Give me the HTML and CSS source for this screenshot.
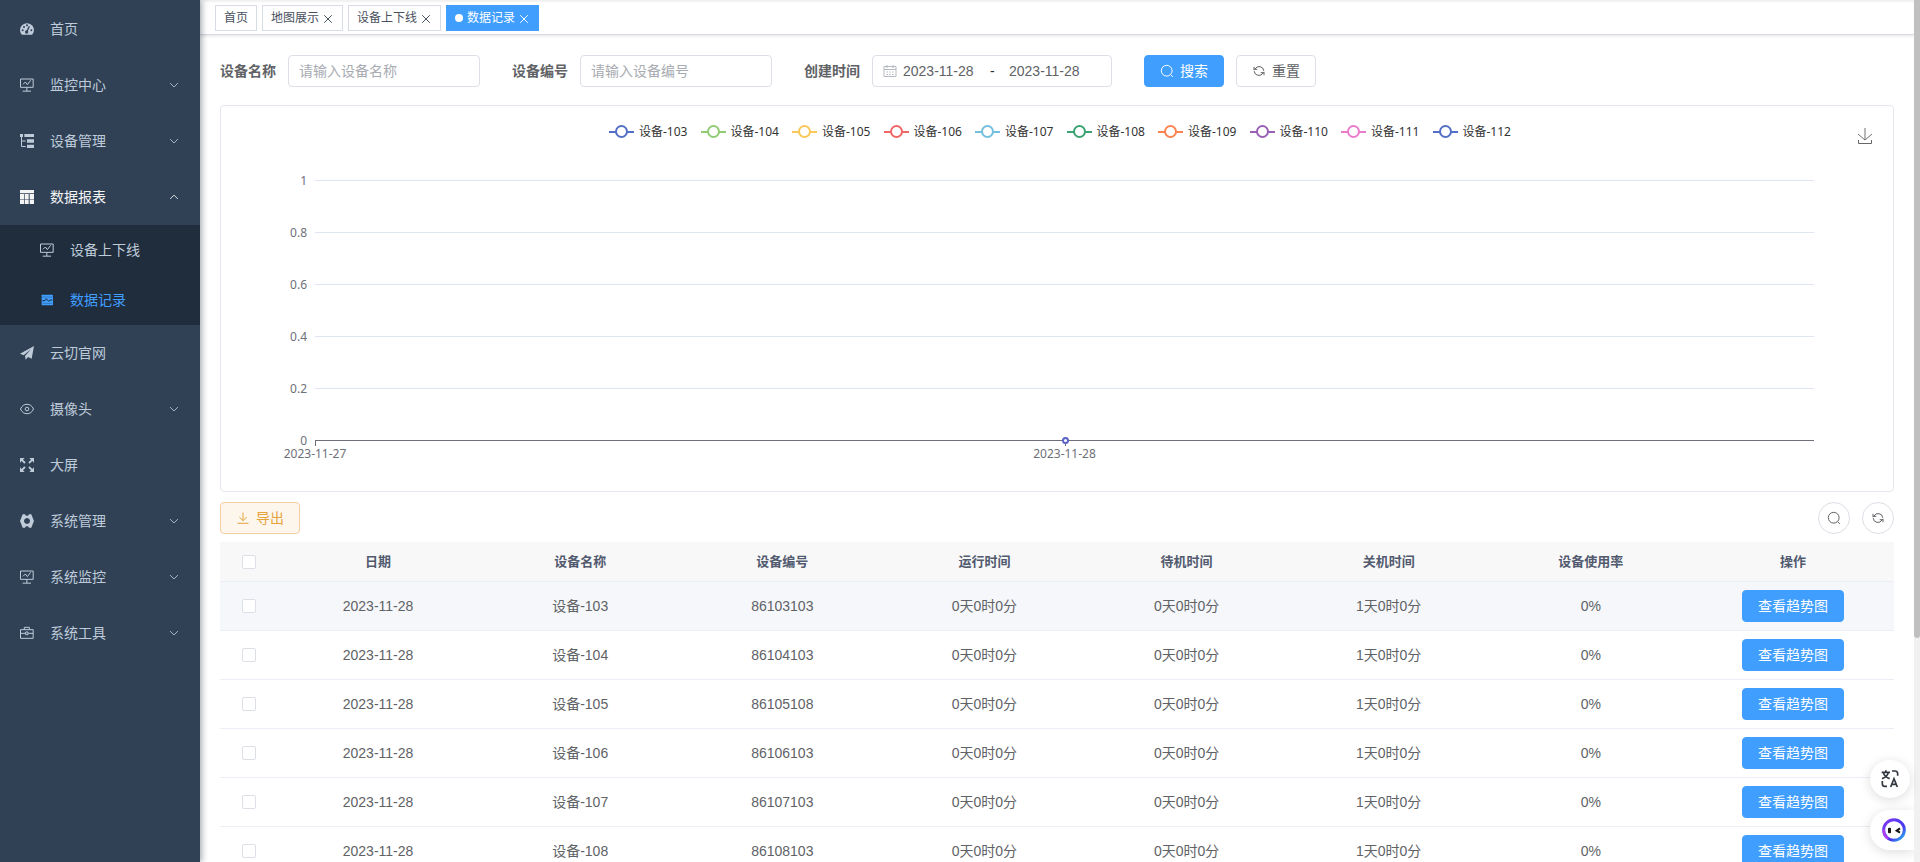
FILE: index.html
```html
<!DOCTYPE html>
<html lang="zh-CN">
<head>
<meta charset="utf-8">
<meta name="viewport" content="width=device-width, initial-scale=1">
<title>数据记录</title>
<link rel="stylesheet" href="styles.css">
</head>
<body>
<svg class="sprite" aria-hidden="true">
  <symbol id="i-monitor" viewBox="0 0 42 42"><path d="M1.500 3h38v25h-38zM20.500 28v11M8 39.500h25M9 19l7-7 6 8 10-13" fill="none" stroke="currentColor" stroke-width="3"/></symbol>
  <symbol id="i-down" viewBox="0 0 14 14"><path d="M2.500 4.800L7 9.300l4.500-4.500" fill="none" stroke="currentColor"/></symbol>
  <symbol id="i-up" viewBox="0 0 14 14"><path d="M2.500 9.300L7 4.800l4.500 4.500" fill="none" stroke="currentColor"/></symbol>
  <symbol id="i-close" viewBox="0 0 12 12"><path d="M2.200 2.200l7.600 7.600M9.800 2.200l-7.600 7.600" fill="none" stroke="currentColor"/></symbol>
  <symbol id="i-search" viewBox="0 0 14 14"><circle cx="6.700" cy="6.700" r="5.400" fill="none" stroke="currentColor"/><path d="M10.600 10.600l2.300 2.300" stroke="currentColor"/></symbol>
  <symbol id="i-refresh" viewBox="0 0 14 14"><path d="M2 6.200V2.800M2 5.300h3.300M3 5a4.700 4.700 0 0 1 8.800 1.800M12 7.800v3.400M12 8.700H8.700M11 9a4.700 4.700 0 0 1-8.800-1.800" fill="none" stroke="currentColor"/></symbol>
  <symbol id="i-download" viewBox="0 0 14 14"><path d="M7 1.500v8M3.300 6L7 9.700 10.700 6M1.500 12.300h11" fill="none" stroke="currentColor"/></symbol>
</svg>

<div class="app">
  <nav class="sidebar">
    <a class="item" href="#"><svg class="icon" viewBox="0 0 42 42"><path d="M6 38C-2 31-1 17 5 11 13 1 29 1 37 11c6 6 7 20-1 27z" fill="currentColor"/><g fill="#304156"><circle cx="8" cy="25" r="3"/><circle cx="12" cy="15" r="3"/><circle cx="21" cy="10" r="3"/><circle cx="34" cy="25" r="3"/><circle cx="20" cy="30" r="5"/></g><path d="M20 30l8-17" stroke="#304156" stroke-width="4"/></svg><span>首页</span></a>
    <a class="item" href="#"><svg class="icon"><use href="#i-monitor"/></svg><span>监控中心</span><svg class="arrow"><use href="#i-down"/></svg></a>
    <a class="item" href="#"><svg class="icon" viewBox="0 0 42 42"><path d="M0 0h9v9H0zM13 0h29v9H13zM21 16h21v10H21zM21 32h21v10H21z" fill="currentColor"/><path d="M4.500 9v28.500H17M4.500 21H17" fill="none" stroke="currentColor" stroke-width="3"/></svg><span>设备管理</span><svg class="arrow"><use href="#i-down"/></svg></a>
    <a class="item open" href="#"><svg class="icon" viewBox="0 0 42 42"><path d="M0 0h42v10H0zM0 12h12v16H0zM14 12h12v16H14zM29 12h13v16H29zM0 29h12v13H0zM14 29h12v13H14zM29 29h13v13H29z" fill="currentColor"/></svg><span>数据报表</span><svg class="arrow"><use href="#i-up"/></svg></a>
    <div class="submenu">
      <a class="item" href="#"><svg class="icon"><use href="#i-monitor"/></svg><span>设备上下线</span></a>
      <a class="item active" href="#"><svg class="icon" viewBox="0 0 42 42"><rect x="5" y="5" width="34" height="32" rx="2" fill="currentColor"/><path d="M5 12h34M8 31h28" stroke="#1f2d3d" stroke-width="1"/><path d="M7 23h8l4-6 7 8 4-4h7" fill="none" stroke="#1f2d3d" stroke-width="3"/></svg><span>数据记录</span></a>
    </div>
    <a class="item" href="#"><svg class="icon" viewBox="0 0 42 42"><path d="M42 0L0 23l11 5L33 10 15 30l2 11 7-8 11 5z" fill="currentColor"/></svg><span>云切官网</span></a>
    <a class="item" href="#"><svg class="icon" viewBox="0 0 42 42"><path d="M1.500 21C9 2 33 2 40.500 21 33 40 9 40 1.500 21z" fill="none" stroke="currentColor" stroke-width="3"/><circle cx="21" cy="21" r="5.500" fill="none" stroke="currentColor" stroke-width="3"/></svg><span>摄像头</span><svg class="arrow"><use href="#i-down"/></svg></a>
    <a class="item" href="#"><svg class="icon" viewBox="0 0 42 42"><path d="M0 0h14l-5 5 8 8-4 4-8-8-5 5zM42 0v14l-5-5-8 8-4-4 8-8-5-5zM0 42V28l5 5 8-8 4 4-8 8 5 5zM42 42H28l5-5-8-8 4-4 8 8 5-5z" fill="currentColor"/></svg><span>大屏</span></a>
    <a class="item" href="#"><svg class="icon" viewBox="0 0 42 42"><path fill-rule="evenodd" d="M8 1h7l3 4h6l3-4h7l4 10 4 10-4 10-4 10h-7l-3-4h-6l-3 4H8L4 31 0 21 4 11zM21 12a9 9 0 1 0 .1 0z" fill="currentColor"/></svg><span>系统管理</span><svg class="arrow"><use href="#i-down"/></svg></a>
    <a class="item" href="#"><svg class="icon"><use href="#i-monitor"/></svg><span>系统监控</span><svg class="arrow"><use href="#i-down"/></svg></a>
    <a class="item" href="#"><svg class="icon" viewBox="0 0 42 42"><path d="M1.500 11h38v26h-38zM13 11V4h15v7M1.500 22H16m9 0h14.500M17 18h7v8h-7z" fill="none" stroke="currentColor" stroke-width="3"/></svg><span>系统工具</span><svg class="arrow"><use href="#i-down"/></svg></a>
  </nav>

  <main class="main">
    <div class="tags">
      <a class="tag" href="#">首页</a>
      <a class="tag" href="#">地图展示<svg class="close"><use href="#i-close"/></svg></a>
      <a class="tag" href="#">设备上下线<svg class="close"><use href="#i-close"/></svg></a>
      <a class="tag current" href="#">数据记录<svg class="close"><use href="#i-close"/></svg></a>
    </div>

    <div class="content">
      <form class="filters">
        <div class="field"><label for="name">设备名称</label><input id="name" class="box" type="text" placeholder="请输入设备名称"></div>
        <div class="field"><label for="code">设备编号</label><input id="code" class="box" type="text" placeholder="请输入设备编号"></div>
        <div class="field"><label for="from">创建时间</label>
          <div class="range">
            <svg class="icon" viewBox="0 0 14 14"><path d="M1 2.500h12v10H1zM1 5.500h12M4 1v3M10 1v3M3.500 8h1.500M6.300 8h1.500M9 8h1.500M3.500 10.500h1.500M6.300 10.500h1.500M9 10.500h1.500" fill="none" stroke="currentColor"/></svg>
            <input id="from" type="text" value="2023-11-28"><span>-</span><input type="text" value="2023-11-28" aria-label="结束时间">
          </div>
        </div>
        <div class="actions">
          <button class="btn primary" type="button"><svg class="glyph"><use href="#i-search"/></svg>搜索</button>
          <button class="btn" type="button"><svg class="glyph"><use href="#i-refresh"/></svg>重置</button>
        </div>
      </form>

      <section class="card">
        <svg class="save" viewBox="0 0 16 18"><path d="M8 1v12M1 7l7 6 7-6" fill="none" stroke="#707070"/><path d="M1.500 13v3.500h13V13" fill="none" stroke="#666"/></svg>
        <ul class="legend">
          <li class="c1"><i></i>设备-103</li><li class="c2"><i></i>设备-104</li><li class="c3"><i></i>设备-105</li><li class="c4"><i></i>设备-106</li><li class="c5"><i></i>设备-107</li><li class="c6"><i></i>设备-108</li><li class="c7"><i></i>设备-109</li><li class="c8"><i></i>设备-110</li><li class="c9"><i></i>设备-111</li><li class="c1"><i></i>设备-112</li>
        </ul>
        <div class="plot">
          <div class="line"><span>1</span></div>
          <div class="line"><span>0.8</span></div>
          <div class="line"><span>0.6</span></div>
          <div class="line"><span>0.4</span></div>
          <div class="line"><span>0.2</span></div>
          <div class="line axis"><span>0</span></div>
        </div>
        <div class="dates"><span class="start">2023-11-27</span><span class="mid">2023-11-28</span></div>
      </section>

      <div class="toolbar">
        <button class="btn warning" type="button"><svg class="glyph"><use href="#i-download"/></svg>导出</button>
        <div class="tools">
          <button class="round" type="button" aria-label="搜索"><svg class="glyph"><use href="#i-search"/></svg></button>
          <button class="round" type="button" aria-label="刷新"><svg class="glyph"><use href="#i-refresh"/></svg></button>
        </div>
      </div>

      <table class="table">
        <colgroup><col class="pick"><col><col><col><col><col><col><col><col></colgroup>
        <thead><tr><th><input type="checkbox" aria-label="全选"></th><th>日期</th><th>设备名称</th><th>设备编号</th><th>运行时间</th><th>待机时间</th><th>关机时间</th><th>设备使用率</th><th>操作</th></tr></thead>
        <tbody>
          <tr class="hover"><td><input type="checkbox" aria-label="设备-103"></td><td>2023-11-28</td><td>设备-103</td><td>86103103</td><td>0天0时0分</td><td>0天0时0分</td><td>1天0时0分</td><td>0%</td><td><button class="btn primary" type="button">查看趋势图</button></td></tr>
          <tr><td><input type="checkbox" aria-label="设备-104"></td><td>2023-11-28</td><td>设备-104</td><td>86104103</td><td>0天0时0分</td><td>0天0时0分</td><td>1天0时0分</td><td>0%</td><td><button class="btn primary" type="button">查看趋势图</button></td></tr>
          <tr><td><input type="checkbox" aria-label="设备-105"></td><td>2023-11-28</td><td>设备-105</td><td>86105108</td><td>0天0时0分</td><td>0天0时0分</td><td>1天0时0分</td><td>0%</td><td><button class="btn primary" type="button">查看趋势图</button></td></tr>
          <tr><td><input type="checkbox" aria-label="设备-106"></td><td>2023-11-28</td><td>设备-106</td><td>86106103</td><td>0天0时0分</td><td>0天0时0分</td><td>1天0时0分</td><td>0%</td><td><button class="btn primary" type="button">查看趋势图</button></td></tr>
          <tr><td><input type="checkbox" aria-label="设备-107"></td><td>2023-11-28</td><td>设备-107</td><td>86107103</td><td>0天0时0分</td><td>0天0时0分</td><td>1天0时0分</td><td>0%</td><td><button class="btn primary" type="button">查看趋势图</button></td></tr>
          <tr><td><input type="checkbox" aria-label="设备-108"></td><td>2023-11-28</td><td>设备-108</td><td>86108103</td><td>0天0时0分</td><td>0天0时0分</td><td>1天0时0分</td><td>0%</td><td><button class="btn primary" type="button">查看趋势图</button></td></tr>
        </tbody>
      </table>
    </div>
  </main>
  <div class="track"><div class="thumb"></div></div>
</div>

<div class="floats">
  <button class="translate" type="button" aria-label="翻译"><svg width="18" height="18" viewBox="0 0 54 54"><g fill="none" stroke="#33373f" stroke-width="5"><path d="M2 7h25M14.500 1v6M22 8c-2 8-9 15-19 18M7 8c2 8 9 15 19 18"/><path d="M33 3h9q8 0 8 8v6M4 33v8q0 8 8 8h6"/><path d="M29 51l10-25 10 25M32 43h14"/></g></svg></button>
  <button class="robot" type="button" aria-label="助手"><svg width="24" height="24" viewBox="0 0 72 72"><defs><linearGradient id="ring" x1="0" y1="0" x2="1" y2="1"><stop offset="0" stop-color="#8a35f0"/><stop offset=".35" stop-color="#5a3df5"/><stop offset=".65" stop-color="#4636f0"/><stop offset="1" stop-color="#20c8e8"/></linearGradient></defs><circle cx="36" cy="36" r="31" fill="#fff" stroke="url(#ring)" stroke-width="9"/><path d="M5 34a31 31 0 0 0 14 28" fill="none" stroke="#b33df0" stroke-width="7"/><rect x="18" y="29" width="9" height="17" rx="3" fill="#151515"/><path d="M54 31l-10 7 10 6" fill="none" stroke="#151515" stroke-width="6"/></svg></button>
</div>
</body>
</html>
```

FILE: styles.css
```css
*, *::before, *::after { box-sizing: border-box; }

body {
  margin: 0;
  overflow: hidden;
  background: #fff;
  color: #606266;
  font: 14px/20px "Liberation Sans", "Noto Sans CJK SC", sans-serif;
}

a { color: inherit; text-decoration: none; }
button, input { font: inherit; color: inherit; }
svg { flex: none; }

.sprite { display: none; }
.app { display: flex; height: 100vh; overflow: hidden; }

/* Sidebar */
.sidebar {
  flex: none;
  width: 200px;
  padding-top: 1px;
  background: #304156;
  color: #bfcbd9;
  box-shadow: 2px 0 6px rgba(0, 21, 41, 0.35);
  z-index: 2;
}
.item { display: flex; align-items: center; height: 56px; padding: 0 20px; }
.item span { flex: 1; }
.icon { width: 14px; height: 14px; margin-right: 16px; }
.arrow { width: 12px; height: 12px; }
.open { color: #f4f4f5; }
.submenu { background: #1f2d3d; }
.submenu .item { height: 50px; padding-left: 40px; }
.submenu .active { color: #409eff; }

/* Tags */
.main { flex: 1; min-width: 0; }
.tags {
  display: flex;
  align-items: center;
  gap: 5px;
  height: 35px;
  padding: 2px 15px 0;
  border-bottom: 1px solid #d8dce5;
  box-shadow: 0 1px 3px rgba(0, 0, 0, 0.12), inset 0 2px 2px rgba(0, 21, 41, 0.06);
}
.tag {
  display: flex;
  align-items: center;
  height: 26px;
  padding: 0 8px;
  border: 1px solid #d8dce5;
  color: #495060;
  font-size: 12px;
}
.close { width: 12px; height: 12px; margin: 2px 0 0 3px; }
.current { background: #409eff; border-color: #409eff; color: #fff; }
.current::before { content: ""; width: 8px; height: 8px; margin-right: 4px; border-radius: 50%; background: #fff; }

.content { padding: 20px; }

/* Filters */
.filters { display: flex; gap: 32px; margin-bottom: 18px; }
.field { display: flex; align-items: center; }
.field label { width: 68px; font-weight: 700; }
.box, .range { height: 32px; border: 1px solid #dcdfe6; border-radius: 4px; background: #fff; }
.box { width: 192px; padding: 0 10px; }
.box::placeholder { color: #a8abb2; }
.range { display: flex; align-items: center; width: 240px; padding: 0 10px; }
.range .icon { margin-right: 6px; color: #b4b8c0; }
.range input { width: 84px; padding: 0; border: 0; outline: 0; background: none; }
.range span { width: 22px; padding-left: 3px; color: #303133; }
.actions { display: flex; gap: 12px; }

.btn {
  display: inline-flex;
  align-items: center;
  justify-content: center;
  gap: 6px;
  height: 32px;
  padding: 0 15px;
  border: 1px solid #dcdfe6;
  border-radius: 4px;
  background: #fff;
}
.primary { background: #409eff; border-color: #409eff; color: #fff; }
.warning { background: #fdf6ec; border-color: #f3d19e; color: #e6a23c; }
.glyph { width: 14px; height: 14px; }

/* Chart */
.card {
  position: relative;
  height: 387px;
  margin-bottom: 10px;
  padding: 16px 79px 0 55px;
  border: 1px solid #e4e7ed;
  border-radius: 4px;
  color: #6e7079;
  font: 12px/16px "Noto Sans", "Noto Sans CJK SC", sans-serif;
}
.save { position: absolute; top: 21px; right: 20px; width: 16px; height: 18px; }
.legend {
  display: flex;
  justify-content: space-between;
  max-width: 932px;
  margin: 0 auto;
  padding: 0 0 0 30px;
  list-style: none;
  color: #333;
}
.legend li { display: flex; align-items: center; gap: 5px; }
.legend i { position: relative; width: 25px; height: 20px; background: linear-gradient(currentColor, currentColor) center / 100% 2px no-repeat; }
.legend i::before {
  content: "";
  position: absolute;
  inset: 3px 6px 4px;
  border: 2px solid;
  border-radius: 50%;
  background: #fff;
}
.c1 i { color: #5470c6; }
.c2 i { color: #91cc75; }
.c3 i { color: #fac858; }
.c4 i { color: #ee6666; }
.c5 i { color: #73c0de; }
.c6 i { color: #3ba272; }
.c7 i { color: #fc8452; }
.c8 i { color: #9a60b4; }
.c9 i { color: #ea7ccc; }

.plot { display: flex; flex-direction: column; height: 312px; margin-top: 13px; }
.line { flex: 1; display: flex; align-items: center; gap: 8px; }
.line span { width: 31px; text-align: right; }
.line::after { content: ""; flex: 1; height: 1px; margin-bottom: 1px; background: #e0e6f1; }
.axis::after { background: #6e7079; }
.dates { position: relative; display: flex; margin: -26px 0 0 39px; }
.dates span { position: relative; width: 70px; margin-left: -35px; padding-top: 5px; text-align: center; }
.dates .mid { position: absolute; left: 50%; }
.dates span::before { content: ""; position: absolute; left: 35px; top: 0; width: 1px; height: 5px; background: #6e7079; }
.dates .mid::after {
  content: "";
  position: absolute;
  left: 32px;
  top: -4px;
  width: 7px;
  height: 7px;
  border: 2px solid #5b62c8;
  border-radius: 50%;
  background: #fff;
}

/* Toolbar and table */
.toolbar { display: flex; justify-content: space-between; margin-bottom: 8px; }
.tools { display: flex; gap: 12px; }
.round {
  display: flex;
  align-items: center;
  justify-content: center;
  width: 32px;
  height: 32px;
  padding: 0;
  border: 1px solid #dcdfe6;
  border-radius: 50%;
  background: #fff;
}
.table { width: 100%; table-layout: fixed; border-collapse: separate; border-spacing: 0; text-align: center; }
.pick { width: 57px; }
.table th, .table td { padding: 0; border-bottom: 1px solid #ebeef5; }
.table th { height: 40px; background: #f8f8f9; color: #515a6e; font-size: 13px; font-weight: 700; }
.table td { height: 49px; }
.table .btn { vertical-align: middle; }
.hover td { background: #f5f7fa; }
.table input {
  appearance: none;
  display: block;
  width: 14px;
  height: 14px;
  margin: 0 auto;
  border: 1px solid #dcdfe6;
  border-radius: 2px;
  background: #fff;
}

.track { flex: none; width: 6px; background: #f1f1f1; }
.thumb { height: 74%; border-radius: 0 0 3px 3px; background: #c0c0c0; }

/* Floating helpers */
.floats {
  position: fixed;
  right: 6px;
  bottom: 12px;
  z-index: 3;
  display: flex;
  flex-direction: column;
  gap: 12px;
}
.floats button {
  display: flex;
  align-items: center;
  justify-content: center;
  padding: 0;
  border: 0;
  background: #fff;
  box-shadow: 0 2px 12px rgba(0, 0, 0, 0.14);
}
.floats .translate { width: 40px; height: 38px; border-radius: 50%; }
.floats .robot { width: 44px; height: 40px; padding-left: 4px; border-radius: 20px 0 0 20px; clip-path: inset(-16px 0 -16px -16px); }
```
